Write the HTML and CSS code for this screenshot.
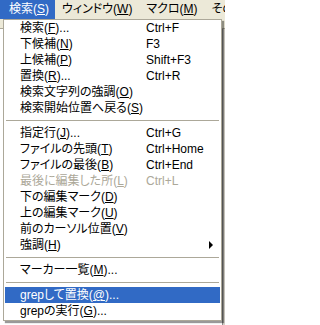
FILE: index.html
```html
<!DOCTYPE html>
<html lang="ja">
<head>
<meta charset="utf-8">
<title>検索メニュー</title>
<link rel="stylesheet" href="styles.css">
</head>
<body>
<div class="app">
  <div class="menubar">
    <span class="mb-item active">検索(<u>S</u>)</span>
    <span class="mb-item">ウィンドウ(<u>W</u>)</span>
    <span class="mb-item">マクロ(<u>M</u>)</span>
    <span class="mb-item">その他</span>
  </div>
  <div class="toolbar"></div>
  <div class="workspace">
    <div class="editor"></div>
    <div class="scrollbar"></div>
  </div>

  <div class="popup">
    <div class="row"><span class="label">検索(<u>F</u>)...</span><span class="key">Ctrl+F</span><span class="sub"></span></div>
    <div class="row"><span class="label">下候補(<u>N</u>)</span><span class="key">F3</span><span class="sub"></span></div>
    <div class="row"><span class="label">上候補(<u>P</u>)</span><span class="key">Shift+F3</span><span class="sub"></span></div>
    <div class="row"><span class="label">置換(<u>R</u>)...</span><span class="key">Ctrl+R</span><span class="sub"></span></div>
    <div class="row"><span class="label">検索文字列の強調(<u>O</u>)</span><span class="key"></span><span class="sub"></span></div>
    <div class="row"><span class="label">検索開始位置へ戻る(<u>S</u>)</span><span class="key"></span><span class="sub"></span></div>
    <div class="sep"></div>
    <div class="row"><span class="label">指定行(<u>J</u>)...</span><span class="key">Ctrl+G</span><span class="sub"></span></div>
    <div class="row"><span class="label">ファイルの先頭(<u>T</u>)</span><span class="key">Ctrl+Home</span><span class="sub"></span></div>
    <div class="row"><span class="label">ファイルの最後(<u>B</u>)</span><span class="key">Ctrl+End</span><span class="sub"></span></div>
    <div class="row disabled"><span class="label">最後に編集した所(<u>L</u>)</span><span class="key">Ctrl+L</span><span class="sub"></span></div>
    <div class="row"><span class="label">下の編集マーク(<u>D</u>)</span><span class="key"></span><span class="sub"></span></div>
    <div class="row"><span class="label">上の編集マーク(<u>U</u>)</span><span class="key"></span><span class="sub"></span></div>
    <div class="row"><span class="label">前のカーソル位置(<u>V</u>)</span><span class="key"></span><span class="sub"></span></div>
    <div class="row"><span class="label">強調(<u>H</u>)</span><span class="key"></span><span class="sub arrow"></span></div>
    <div class="sep"></div>
    <div class="row"><span class="label">マーカー一覧(<u>M</u>)...</span><span class="key"></span><span class="sub"></span></div>
    <div class="sep"></div>
    <div class="row selected"><span class="label">grepして置換(<u>@</u>)...</span><span class="key"></span><span class="sub"></span></div>
    <div class="row"><span class="label">grepの実行(<u>G</u>)...</span><span class="key"></span><span class="sub"></span></div>
  </div>
</div>
</body>
</html>
```

FILE: styles.css
```css
html, body {
  margin: 0;
  padding: 0;
}

body {
  width: 225px;
  height: 325px;
  overflow: hidden;
  background: #ffffff;
  font-family: "Liberation Sans", "Noto Sans CJK JP", sans-serif;
  font-size: 12px;
  font-feature-settings: "palt";
  color: #000000;
}

.app {
  position: relative;
  width: 225px;
  height: 325px;
  display: flex;
  flex-direction: column;
}

u {
  text-decoration: underline;
  text-underline-offset: 1px;
  text-decoration-thickness: 1px;
}

.menubar {
  height: 19px;
  display: flex;
  background: #ece9d8;
  white-space: nowrap;
  line-height: 19px;
}

.mb-item {
  flex: none;
  padding: 0 7px;
}

.mb-item.active {
  padding-left: 9px;
  padding-right: 6px;
  background: #316ac5;
  color: #ffffff;
}

.toolbar {
  height: 9px;
  background: #ece9d8;
  border-bottom: 1px solid #aca899;
}

.workspace {
  flex: 1;
  display: flex;
}

.editor {
  flex: 1;
  background: #ffffff;
}

.scrollbar {
  width: 2px;
  background: #d4d0c8;
  border-left: 1px solid #8c8c8c;
}

.popup {
  position: absolute;
  left: 3px;
  top: 19px;
  width: 219px;
  box-sizing: border-box;
  background: #ffffff;
  border: 1px solid #aca899;
  padding: 0 1px 1px 1px;
  box-shadow: 2px 2px 1px rgba(0, 0, 0, 0.4);
  display: flex;
  flex-direction: column;
}

.row {
  height: 16px;
  line-height: 16px;
  display: flex;
  white-space: nowrap;
}

.label {
  flex: none;
  width: 126px;
  margin-left: 15px;
}

.key {
  flex: 1;
}

.sub {
  flex: none;
  width: 12px;
}

.row.disabled {
  color: #aca899;
}

.row.selected {
  background: #316ac5;
  color: #ffffff;
}

.sep {
  height: 9px;
  display: flex;
  flex-direction: column;
  justify-content: center;
  padding: 0 1px;
}

.sep::before {
  content: "";
  display: block;
  height: 1px;
  background: #aca899;
}

.arrow {
  display: flex;
  align-items: center;
}

.arrow::before {
  content: "";
  display: block;
  width: 0;
  height: 0;
  border-top: 4px solid transparent;
  border-bottom: 4px solid transparent;
  border-left: 4px solid #000000;
  margin-left: 1px;
}
```
